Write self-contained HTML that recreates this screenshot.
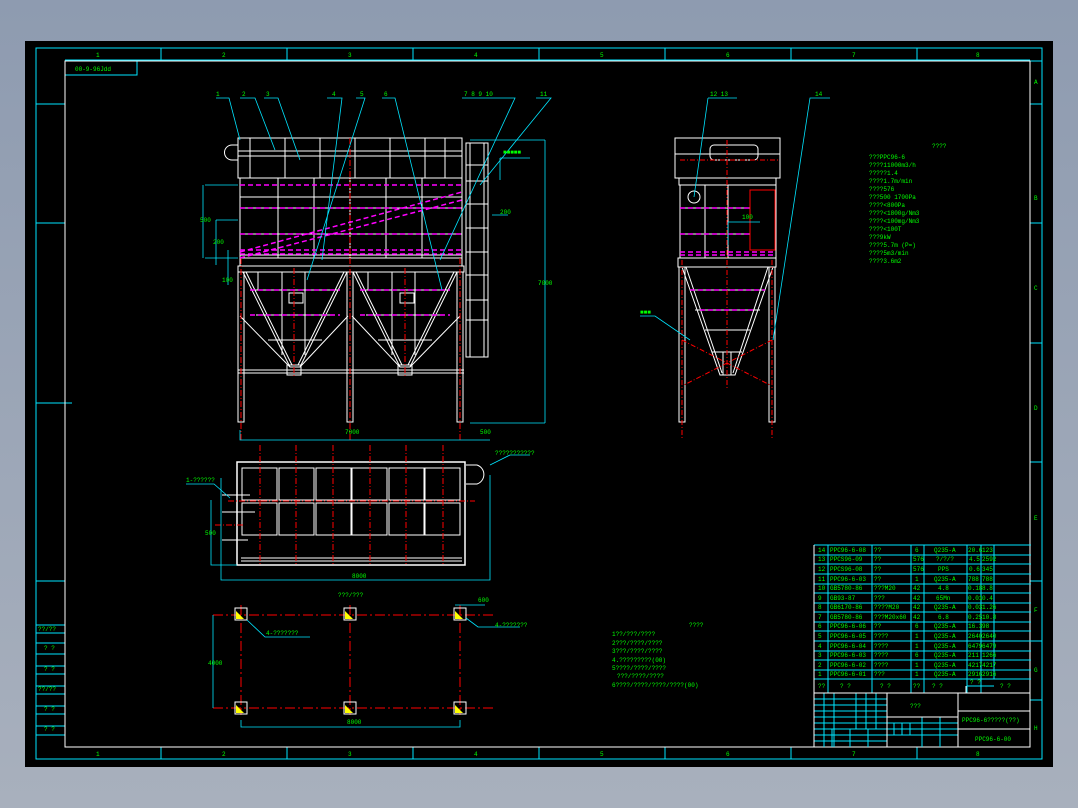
<!DOCTYPE html>
<html><head><meta charset="utf-8"><style>
html,body{margin:0;padding:0;background:#98a4b6;}
body{width:1078px;height:808px;overflow:hidden;background:linear-gradient(#8e9bb0,#a8b0bd);}
svg{position:absolute;left:0;top:0}
text{font-family:"Liberation Mono",monospace;fill:#00ff00;font-size:6px}
</style></head><body>
<svg width="1078" height="808" viewBox="0 0 1078 808">
<rect x="25" y="41" width="1028" height="726" fill="#000"/>
<g fill="none" stroke="#00e5ff" stroke-width="1">
<rect x="36" y="48" width="1006" height="711"/>
<line x1="65" y1="60" x2="1030" y2="60"/>
<line x1="1030" y1="61" x2="1042" y2="61"/>
<path d="M161 48V60M287 48V60M413 48V60M539 48V60M665 48V60M791 48V60M917 48V60"/>
<path d="M161 747V759M287 747V759M413 747V759M539 747V759M665 747V759M791 747V759M917 747V759"/>
<path d="M1030 104H1042M1030 223H1042M1030 343H1042M1030 462H1042M1030 581H1042M1030 641H1042M1030 700H1042"/>
<path d="M36 104H65M36 223H65M36 403H72M36 581H65"/>
<path d="M36 625H65M36 633H65M36 643H65M36 654H65M36 666H65M36 674H65M36 686H65M36 694H65M36 706H65M36 714H65M36 726H65M36 735H65"/>
<path d="M65 75H137V61"/>
</g>
<rect x="65" y="61" width="965" height="686" fill="none" stroke="#fff" stroke-width="1"/>
<g>
<text x="75" y="71" font-size="8">00-9-96Jdd</text>
<text x="96" y="57">1</text><text x="222" y="57">2</text><text x="348" y="57">3</text><text x="474" y="57">4</text><text x="600" y="57">5</text><text x="726" y="57">6</text><text x="852" y="57">7</text><text x="976" y="57">8</text>
<text x="96" y="756">1</text><text x="222" y="756">2</text><text x="348" y="756">3</text><text x="474" y="756">4</text><text x="600" y="756">5</text><text x="726" y="756">6</text><text x="852" y="756">7</text><text x="976" y="756">8</text>
<text x="1034" y="84">A</text><text x="1034" y="200">B</text><text x="1034" y="290">C</text><text x="1034" y="410">D</text><text x="1034" y="520">E</text><text x="1034" y="612">F</text><text x="1034" y="672">G</text><text x="1034" y="730">H</text>
<text x="38" y="631">??/??</text><text x="44" y="650">? ?</text><text x="44" y="671">? ?</text><text x="38" y="691">??/??</text><text x="44" y="711">? ?</text><text x="44" y="731">? ?</text>
</g>

<!-- FRONT VIEW -->
<g fill="none" stroke="#fff" stroke-width="1">
<rect x="238" y="138" width="224" height="40"/>
<line x1="238" y1="151" x2="462" y2="151"/><line x1="238" y1="156" x2="462" y2="156"/>
<path d="M250 138V178M285 138V178M320 138V178M355 138V178M390 138V178M425 138V178M445 138V178"/>
<path d="M232 145 A7 7 0 0 0 232 160 L238 160 M232 145 L238 145"/>
<rect x="240" y="178" width="222" height="80"/>
<path d="M240 197H462M240 208H462M240 234H462M240 255H462"/>
<path d="M278 178V258M314 178V258M350 178V258M386 178V258M422 178V258"/>
<rect x="240" y="258" width="222" height="8"/>
<rect x="238" y="266" width="226" height="6"/>
<path d="M243 272 L290 367 L300 367 L347 272"/><path d="M246 272 L292 365 M344 272 L298 365"/>
<path d="M353 272 L400 367 L410 367 L457 272"/><path d="M356 272 L402 365 M454 272 L408 365"/>
<path d="M250 290H340M256 315H334M268 340H322M360 290H450M366 315H444M378 340H432"/>
<path d="M258 272V290M282 272V355M305 272V355M368 272V290M392 272V355M415 272V355"/>
<rect x="289" y="293" width="14" height="10"/><rect x="400" y="293" width="14" height="10"/>
<rect x="287" y="365" width="14" height="10"/><rect x="398" y="365" width="14" height="10"/>
<path d="M240 316 L290 367 M348 316 L300 367 M352 316 L400 367 M460 316 L410 367"/>
<path d="M238 370H464M238 373H464"/>
<rect x="238" y="272" width="6" height="150"/><rect x="347" y="272" width="6" height="150"/><rect x="457" y="272" width="6" height="150"/>
<rect x="466" y="143" width="22" height="214"/>
<path d="M470 143V357M484 143V357M466 165H488M466 181H488M466 204H488M466 228H488M466 252H488M466 275H488M466 300H488M466 320H488"/>
</g>
<g fill="none" stroke="#ff0000" stroke-width="1" stroke-dasharray="6 2 1 2">
<path d="M241 258V440M350 258V440M460 258V440M294 268V378M405 268V378M350 138V258"/>
</g>
<g fill="none" stroke="#ff00ff" stroke-width="1.5" stroke-dasharray="5 3">
<path d="M240 185H462M240 208H462M240 234H462M240 250H462M240 254H462"/>
<path d="M240 252 L462 192"/><path d="M240 258 L462 200"/>
<path d="M250 290H340M360 290H450M250 315H340M360 315H450"/>
</g>
<g fill="none" stroke="#00e5ff" stroke-width="0.8">
<path d="M216 98H229L240 140M240 98H255L275 150M264 98H278L300 160M327 98H342L322 260M356 98H365L307 280M382 98H395L442 290M462 98H515L440 260M536 98H551L480 185"/>
<path d="M203 185V258M205 185H238M205 258H238M216 220V265M216 220H238M228 250V285"/>
<path d="M240 430V440H490M545 140V423M470 140H545M470 423H545"/>
<path d="M500 158H530M500 158V180M492 215H508"/>
</g>
<g>
<text x="216" y="96">1</text><text x="242" y="96">2</text><text x="266" y="96">3</text><text x="332" y="96">4</text><text x="360" y="96">5</text><text x="384" y="96">6</text>
<text x="464" y="96">7 8 9 10</text><text x="540" y="96">11</text>
<text x="200" y="222">500</text><text x="213" y="244">200</text><text x="222" y="282">100</text><text x="345" y="434">7000</text><text x="480" y="434">500</text>
<text x="538" y="285">7000</text><text x="503" y="154" font-size="5">&#x25A0;&#x25A0;&#x25A0;&#x25A0;&#x25A0;</text><text x="500" y="214">200</text>
</g>

<!-- SIDE VIEW -->
<g fill="none" stroke="#fff" stroke-width="1">
<rect x="675" y="138" width="105" height="40"/><line x1="675" y1="154" x2="780" y2="154"/>
<rect x="710" y="145" width="48" height="15" rx="4"/>
<rect x="679" y="178" width="97" height="7"/>
<rect x="680" y="185" width="96" height="73"/>
<path d="M680 208H750M680 234H750M705 185V258M728 185V258"/>
<circle cx="694" cy="197" r="6"/>
<rect x="750" y="190" width="25" height="60"/>
<rect x="678" y="258" width="98" height="9"/>
<path d="M682 267 L720 375 L735 375 L773 267M686 267 L722 373M768 267 L733 373"/>
<path d="M690 290H765M695 310H760M705 330H750M712 352H742"/>
<path d="M723 352V375M731 352V375"/>
<rect x="679" y="267" width="6" height="155"/><rect x="769" y="267" width="6" height="155"/>
</g>
<g fill="none" stroke="#ff0000" stroke-width="1" stroke-dasharray="5 2 1 2">
<path d="M727 140V390M682 260V440M772 260V440M682 340L770 385M772 340L684 385M680 160H780"/>
<rect x="750" y="190" width="25" height="60" stroke-dasharray="none"/>
</g>
<g fill="none" stroke="#ff00ff" stroke-width="1.5" stroke-dasharray="5 3"><path d="M680 208H750M680 234H750M680 252H776M680 255H776M690 290H765M700 310H755"/></g>
<g fill="none" stroke="#00e5ff" stroke-width="0.8">
<path d="M708 98H737M708 98L694 197M810 98H830L810 98L773 340M640 316H655L690 340M728 222H760M728 222V245"/>
</g>
<text x="710" y="96">12 13</text><text x="815" y="96">14</text><text x="640" y="314">&#x25A0;&#x25A0;&#x25A0;</text><text x="742" y="219">100</text>

<g font-size="5.5">
<text x="932" y="148" font-size="7">????</text>
<text x="869" y="159">???PPC96-6</text><text x="869" y="167">????11000m3/h</text><text x="869" y="175">?????1.4</text><text x="869" y="183">????1.7m/min</text><text x="869" y="191">????576</text><text x="869" y="199">???500 1700Pa</text><text x="869" y="207">????&lt;800Pa</text><text x="869" y="215">????&lt;1800g/Nm3</text><text x="869" y="223">????&lt;100mg/Nm3</text><text x="869" y="231">????&lt;100T</text><text x="869" y="239">???9kW</text><text x="869" y="247">????5.7m (P=)</text><text x="869" y="255">????5m3/min</text><text x="869" y="263">????3.6m2</text>
</g>

<!-- PLAN VIEW -->
<g fill="none" stroke="#fff" stroke-width="1">
<rect x="237" y="462" width="228" height="103" stroke-width="1.5"/>
<path d="M242 468h35v32h-35zM279 468h35v32h-35zM316 468h35v32h-35zM352 468h35v32h-35zM389 468h35v32h-35zM425 468h35v32h-35z"/>
<path d="M242 503h35v32h-35zM279 503h35v32h-35zM316 503h35v32h-35zM352 503h35v32h-35zM389 503h35v32h-35zM425 503h35v32h-35z"/>
<path d="M241 558H462M241 561H462"/>
<path d="M466 465H477A10 10 0 0 1 477 484H466"/>
<path d="M222 495H250M222 512H255M222 540H248"/>
</g>
<g fill="none" stroke="#ff0000" stroke-width="1" stroke-dasharray="6 2 1 2">
<path d="M260 445V565M296 445V565M333 445V565M370 445V565M406 445V565M443 445V565M228 501H475M215 525H245"/>
</g>
<g fill="none" stroke="#00e5ff" stroke-width="0.8">
<path d="M186 484H214L230 498M211 500V565H237M221 478V580H490V475M490 465L510 455H530"/>
</g>
<text x="186" y="482">1-??????</text><text x="495" y="455">???????????</text><text x="205" y="535">500</text><text x="352" y="578">8000</text>

<!-- FOUNDATION -->
<g fill="none" stroke="#ff0000" stroke-width="1" stroke-dasharray="10 3 2 3">
<path d="M213 615H493M213 708H493M241 605V715M350 605V715M460 605V715"/>
</g>
<g fill="none" stroke="#fff" stroke-width="1">
<rect x="235" y="608" width="12" height="12"/><rect x="344" y="608" width="12" height="12"/><rect x="454" y="608" width="12" height="12"/>
<rect x="235" y="702" width="12" height="12"/><rect x="344" y="702" width="12" height="12"/><rect x="454" y="702" width="12" height="12"/>
</g>
<g fill="#ffff00"><path d="M236 619V611L244 619z"/><path d="M345 619V611L353 619z"/><path d="M455 619V611L463 619z"/><path d="M236 713V705L244 713z"/><path d="M345 713V705L353 713z"/><path d="M455 713V705L463 713z"/></g>
<g fill="none" stroke="#00e5ff" stroke-width="0.8">
<path d="M213 615V708M241 720V727H460V720M247 620L265 637H310M455 605H485M466 618L478 627H520"/>
</g>
<text x="338" y="597">???/???</text><text x="266" y="635">4-???????</text><text x="208" y="665">4000</text><text x="347" y="724">8000</text><text x="478" y="602">600</text><text x="495" y="627">4-???????</text>

<g font-size="5.5">
<text x="689" y="627" font-size="7">????</text>
<text x="612" y="636">1??/???/????</text><text x="612" y="645">2???/????/????</text><text x="612" y="653">3???/????/????</text><text x="612" y="662">4.?????????(00)</text><text x="612" y="670">5????/????/????</text><text x="617" y="678">???/????/????</text><text x="612" y="687">6????/????/????/????(00)</text>
</g>

<!-- TITLE BLOCK -->
<g fill="none" stroke="#00e5ff" stroke-width="1">
<path d="M814 545H1031M814 555H1031M814 564H1031M814 574H1031M814 584H1031M814 593H1031M814 603H1031M814 612H1031M814 622H1031M814 631H1031M814 641H1031M814 651H1031M814 660H1031M814 670H1031M814 679H1031"/>
<path d="M814 545V693M828 545V693M872 545V693M911 545V693M924 545V693M967 545V693M981 545V693M994 545V679"/>
<path d="M967 686H994M814 699H887M814 705H887M814 711H887M814 717H887M814 723H887M814 729H1030M814 735H887M814 741H887"/>
<path d="M824 693V747M834 693V747M856 693V729M866 693V729M876 693V729M832 729V747M850 729V747M868 729V747M887 723H958M887 735H958M894 723V735M902 723V735M910 723V735M922 717V747M940 717V747"/>
</g>
<g fill="none" stroke="#fff" stroke-width="1">
<path d="M814 693H1030M887 693V747M958 693V747M958 711H1030M958 729H1030M887 717H958M814 545V747M966 686V693"/>
</g>
<g font-size="5.2">
<text x="818" y="552">14</text><text x="830" y="552">PPC96-6-08</text><text x="874" y="552">??</text><text x="915" y="552">6</text><text x="934" y="552">Q235-A</text><text x="968" y="552">20.6</text><text x="982" y="552">123</text>
<text x="818" y="561">13</text><text x="830" y="561">PPCS96-09</text><text x="874" y="561">??</text><text x="913" y="561">576</text><text x="936" y="561">?/?/?</text><text x="969" y="561">4.5</text><text x="982" y="561">2592</text>
<text x="818" y="571">12</text><text x="830" y="571">PPCS96-08</text><text x="874" y="571">??</text><text x="913" y="571">576</text><text x="938" y="571">PPS</text><text x="969" y="571">0.6</text><text x="982" y="571">345</text>
<text x="818" y="581">11</text><text x="830" y="581">PPC96-6-03</text><text x="874" y="581">??</text><text x="915" y="581">1</text><text x="934" y="581">Q235-A</text><text x="968" y="581">788</text><text x="982" y="581">788</text>
<text x="818" y="590">10</text><text x="830" y="590">GB5780-86</text><text x="874" y="590">???M20</text><text x="913" y="590">42</text><text x="938" y="590">4.8</text><text x="968" y="590">0.18</text><text x="982" y="590">8.8</text>
<text x="818" y="600">9</text><text x="830" y="600">GB93-87</text><text x="874" y="600">???</text><text x="913" y="600">42</text><text x="936" y="600">65Mn</text><text x="968" y="600">0.01</text><text x="982" y="600">0.4</text>
<text x="818" y="609">8</text><text x="830" y="609">GB6170-86</text><text x="874" y="609">????M20</text><text x="913" y="609">42</text><text x="934" y="609">Q235-A</text><text x="968" y="609">0.03</text><text x="982" y="609">1.26</text>
<text x="818" y="619">7</text><text x="830" y="619">GB5780-86</text><text x="874" y="619">???M20x60</text><text x="913" y="619">42</text><text x="938" y="619">6.8</text><text x="968" y="619">0.25</text><text x="982" y="619">10.8</text>
<text x="818" y="628">6</text><text x="830" y="628">PPC96-6-06</text><text x="874" y="628">??</text><text x="915" y="628">6</text><text x="934" y="628">Q235-A</text><text x="968" y="628">16.3</text><text x="982" y="628">98</text>
<text x="818" y="638">5</text><text x="830" y="638">PPC96-6-05</text><text x="874" y="638">????</text><text x="915" y="638">1</text><text x="934" y="638">Q235-A</text><text x="968" y="638">2640</text><text x="982" y="638">2640</text>
<text x="818" y="648">4</text><text x="830" y="648">PPC96-6-04</text><text x="874" y="648">????</text><text x="915" y="648">1</text><text x="934" y="648">Q235-A</text><text x="968" y="648">6479</text><text x="982" y="648">6479</text>
<text x="818" y="657">3</text><text x="830" y="657">PPC96-6-03</text><text x="874" y="657">????</text><text x="915" y="657">6</text><text x="934" y="657">Q235-A</text><text x="968" y="657">211</text><text x="982" y="657">1266</text>
<text x="818" y="667">2</text><text x="830" y="667">PPC96-6-02</text><text x="874" y="667">????</text><text x="915" y="667">1</text><text x="934" y="667">Q235-A</text><text x="968" y="667">4217</text><text x="982" y="667">4217</text>
<text x="818" y="676">1</text><text x="830" y="676">PPC96-6-01</text><text x="874" y="676">???</text><text x="915" y="676">1</text><text x="934" y="676">Q235-A</text><text x="968" y="676">2916</text><text x="982" y="676">2916</text>
<text x="818" y="688">??</text><text x="840" y="688">? ?</text><text x="880" y="688">? ?</text><text x="913" y="688">??</text><text x="932" y="688">? ?</text><text x="970" y="684">? ?</text><text x="1000" y="688">? ?</text>
<text x="910" y="708" font-size="7">???</text>
<text x="962" y="722" font-size="6.5">PPC96-6?????(??)</text>
<text x="975" y="741" font-size="7">PPC96-6-00</text>
</g>
</svg>
</body></html>
